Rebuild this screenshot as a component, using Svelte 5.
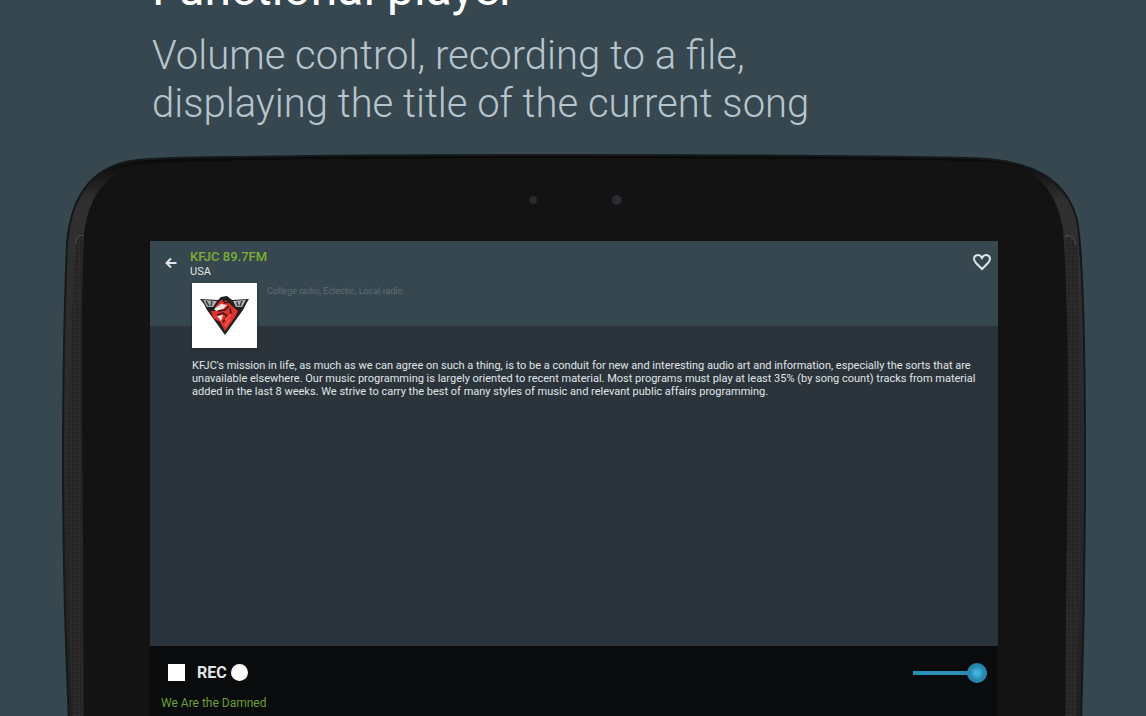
<script>
	let favorite = $state(false);
	let volume = $state(100);

	const station = {
		name: 'KFJC 89.7FM',
		country: 'USA',
		tags: 'College radio, Eclectic, Local radio',
		song: 'We Are the Damned'
	};
</script>

<main class="page">
	<header class="promo">
		<h1>Functional player</h1>
		<p>Volume control, recording to a file,<br />displaying the title of the current song</p>
	</header>

	<section class="device">
		<svg class="frame" viewBox="0 0 1024 562" preserveAspectRatio="none" aria-hidden="true">
			<defs>
				<pattern id="grip" width="4" height="4" patternUnits="userSpaceOnUse">
					<rect width="4" height="4" fill="#282828" />
					<circle cx="1" cy="1" r="0.8" fill="#333" />
					<circle cx="3" cy="3" r="0.8" fill="#1f1f1f" />
				</pattern>
				<linearGradient id="rim" x1="0" y1="0" x2="0" y2="1">
					<stop offset="0" stop-color="#070707" />
					<stop offset="0.03" stop-color="#151515" />
					<stop offset="0.08" stop-color="#303030" />
					<stop offset="0.6" stop-color="#292929" />
					<stop offset="1" stop-color="#202020" />
				</linearGradient>
			</defs>
			<path
				d="M7 570 Q1 430 1 310 Q1 190 5 89 C9 44 28 11 76 6 Q110 3 180 3 Q300 1 512 1 Q760 1 905 4 C975 5 1005 28 1015 66 C1021 100 1023 190 1023 310 Q1023 440 1019 570 Z"
				fill="url(#rim)"
				stroke="#15191b"
				stroke-width="2"
			/>
			<path d="M13 88 Q16 79 21 82 L21 562 H10 Q5 400 6 270 Z" fill="url(#grip)" />
			<path d="M1003 84 Q1011 80 1015 90 L1019 270 Q1019 420 1014 562 H1004 Z" fill="url(#grip)" />
			<path d="M13 90 Q15 79 22 82" fill="none" stroke="#515151" />
			<path d="M1003 82 Q1012 80 1014 91" fill="none" stroke="#515151" />
			<path
				d="M22 562 L20 270 Q19 140 22 80 C27 38 48 12 94 9 Q180 4 512 4 Q840 4 930 8 C970 12 993 30 1001 75 Q1006 140 1006 270 L1003 562 Z"
				fill="#131313"
			/>
			<circle cx="471" cy="46" r="4" fill="#292a2b" />
			<circle cx="555" cy="46" r="5" fill="#292e34" />
		</svg>

		<div class="screen">
			<div class="station">
				<button type="button" class="back" aria-label="Back">
					<svg width="12" height="12" viewBox="0 0 12 12">
						<path d="M6 1.5 L1.5 6 L6 10.5 M2 6 H11.5" fill="none" stroke="#dfe6ea" stroke-width="2" />
					</svg>
				</button>
				<div class="info">
					<h2>{station.name}</h2>
					<p class="country">{station.country}</p>
					<div class="details">
						<div class="logo">
							<svg width="49" height="40" viewBox="0 0 49 40" role="img" aria-label="KFJC">
								<path d="M0 3 L18 4 L21 1 L27 0 L32 4 L49 3 L46 8 L43 14 L25 39 L7 14 L4 8 Z" fill="#202020" />
								<path d="M3 4 L17 5 L13 11 L7 11 Z M33 5 L46 4 L42 11 L36 11 Z" fill="#aeb1b2" />
								<path d="M6 5 l3 5 M12 5 l-1 5 M37 6 l1 4 M42 5 l-2 5" stroke="#3b3d3e" stroke-width="1.5" fill="none" />
								<path
									d="M15 11 L21 4 L27 5 L32 10 L38 15 L35 21 L30 28 L25 35 L20 26 L13 22 L11 15 L17 15 Z"
									fill="#e3302c"
								/>
								<path d="M14 13 L21 8 L27 9 L23 13 L16 15 Z M17 20 L23 19 L21 25 Z" fill="#f2e6e4" />
								<path
									d="M18 15 L25 14 L29 10 M17 19 L23 17 L27 20 L23 26 M30 12 L31 17 L28 20 M23 4 L25 7 L29 6"
									fill="none"
									stroke="#33191a"
									stroke-width="1.5"
								/>
								<path d="M25 24 L31 18 M25 30 L30 23" fill="none" stroke="#ff5247" stroke-width="2" />
							</svg>
						</div>
						<p class="tags">{station.tags}</p>
					</div>
				</div>
				<button
					type="button"
					class="favorite"
					aria-label="Favorite"
					aria-pressed={favorite}
					onclick={() => (favorite = !favorite)}
				>
					<svg width="18" height="18" viewBox="0 0 18 18">
						<path
							d="M9 16 L3 10 C-1 5 2 2 5 2 C7 2 8 3 9 5 C10 3 11 2 13 2 C16 2 19 5 15 10 Z"
							fill={favorite ? '#dce6ec' : 'none'}
							stroke="#dce6ec"
							stroke-width="2"
						/>
					</svg>
				</button>
			</div>

			<div class="about">
				<p>
					KFJC's mission in life, as much as we can agree on such a thing, is to be a conduit for new and
					interesting audio art and information, especially the sorts that are<br />
					unavailable elsewhere. Our music programming is largely oriented to recent material. Most programs
					must play at least 35% (by song count) tracks from material<br />
					added in the last 8 weeks. We strive to carry the best of many styles of music and relevant public
					affairs programming.
				</p>
			</div>

			<div class="player">
				<div class="controls">
					<button type="button" class="stop" aria-label="Stop"></button>
					<button type="button" class="rec">REC<span class="dot"></span></button>
					<input type="range" min="0" max="100" bind:value={volume} aria-label="Volume" />
				</div>
				<p class="song">{station.song}</p>
			</div>
		</div>
	</section>
</main>

<style>
	:global(body) {
		margin: 0;
		background: #37474f;
	}

	.page {
		display: flex;
		flex-direction: column;
		height: 100vh;
		overflow: hidden;
		background: #37474f;
		font-family: Roboto, 'Liberation Sans', sans-serif;
	}

	h1,
	h2,
	p {
		margin: 0;
		font-weight: 400;
	}

	button {
		padding: 0;
		border: 0;
		background: none;
		color: inherit;
		font: inherit;
		cursor: pointer;
	}

	svg {
		display: block;
	}

	.promo {
		flex: none;
		margin-top: -37px;
		padding: 0 152px 26px;
	}

	.promo h1 {
		color: #fff;
		font-size: 48px;
		font-weight: 400;
		line-height: 52px;
		margin-bottom: 17px;
	}

	.promo p {
		color: #b6c5cd;
		font-size: 40px;
		font-weight: 300;
		line-height: 48px;
		white-space: nowrap;
	}

	.device {
		position: relative;
		flex: 1;
		display: flex;
		margin: 0 60px 0 62px;
		padding: 87px 88px 0;
	}

	.frame {
		position: absolute;
		inset: 0;
		width: 100%;
		height: 100%;
	}

	.screen {
		position: relative;
		flex: 1;
		display: flex;
		flex-direction: column;
		background: #2a343a;
		color: #e0e5e8;
	}

	.station {
		display: flex;
		align-items: flex-start;
		height: 77px;
		padding: 8px 7px 0 15px;
		background: #37474f;
	}

	.back {
		margin: 8px 13px 0 0;
	}

	.info {
		flex: 1;
	}

	.info h2 {
		color: #7cb032;
		font-size: 13px;
		font-weight: 500;
		line-height: 15px;
	}

	.country {
		font-size: 11px;
		line-height: 16px;
	}

	.details {
		display: flex;
		gap: 10px;
		padding: 3px 0 0 2px;
	}

	.logo {
		display: flex;
		align-items: center;
		justify-content: center;
		width: 65px;
		height: 65px;
		background: #fff;
		box-shadow: 0 1px 2px #16252d;
	}

	.tags {
		color: #5d6e77;
		font-size: 9px;
		line-height: 16px;
	}

	.favorite {
		margin-top: 4px;
	}

	.about {
		flex: 1;
		padding: 33px 20px 0 42px;
	}

	.about p {
		font-size: 11px;
		line-height: 13px;
	}

	.player {
		height: 70px;
		background: #090b0c;
	}

	.controls {
		display: flex;
		align-items: center;
		height: 53px;
		padding: 0 11px 0 18px;
	}

	.stop {
		width: 17px;
		height: 17px;
		margin-right: 12px;
		background: #fff;
	}

	.rec {
		display: flex;
		align-items: center;
		gap: 4px;
		font-size: 16px;
		font-weight: 700;
	}

	.dot {
		width: 17px;
		height: 17px;
		border-radius: 50%;
		background: #fff;
	}

	input[type='range'] {
		appearance: none;
		width: 74px;
		height: 20px;
		margin: 0 0 0 auto;
		background: linear-gradient(#2b8eb5, #2b8eb5) center / 100% 4px no-repeat;
	}

	input[type='range']::-webkit-slider-thumb {
		appearance: none;
		width: 20px;
		height: 20px;
		border-radius: 50%;
		background: radial-gradient(circle, #3fb4df 15%, #2787ae 50%);
	}

	.song {
		padding-left: 11px;
		color: #6f9f31;
		font-size: 12px;
		font-weight: 400;
		line-height: 8px;
	}
</style>
